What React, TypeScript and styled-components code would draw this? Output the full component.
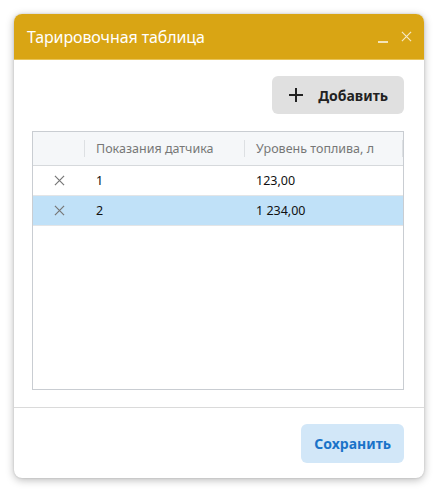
import { createGlobalStyle } from 'styled-components'
import styled from 'styled-components'

const GlobalStyle = createGlobalStyle`
  html, body {
    margin: 0;
    padding: 0;
    background: #ffffff;
    font-family: 'Noto Sans', 'Open Sans', sans-serif;
  }
`

type Row = { id: number; sensor: string; fuel: string }

const rows: Row[] = [
  { id: 1, sensor: '1', fuel: '123,00' },
  { id: 2, sensor: '2', fuel: '1 234,00' },
]

const selectedId = 2

const CloseIcon = ({ size = 12, color = 'currentColor' }: { size?: number; color?: string }) => (
  <svg width={size} height={size} viewBox='0 0 12 12' fill='none'>
    <path d='M1 1L11 11M11 1L1 11' stroke={color} strokeWidth='1.3' />
  </svg>
)

const PlusIcon = () => (
  <svg width='14' height='14' viewBox='0 0 14 14' fill='none'>
    <path d='M7 0V14M0 7H14' stroke='#222' strokeWidth='2' />
  </svg>
)

const App = () => {
  return (
    <>
      <GlobalStyle />
      <Page>
        <Dialog>
          <Header>
            <Title>Тарировочная таблица</Title>
            <HeaderActions>
              <Minimize />
              <CloseIcon size={11} color='rgba(255,255,255,0.75)' />
            </HeaderActions>
          </Header>
          <Body>
            <Toolbar>
              <AddButton>
                <PlusIcon />
                Добавить
              </AddButton>
            </Toolbar>
            <Table>
              <HeadRow>
                <HeadCell />
                <HeadCell $divider>Показания датчика</HeadCell>
                <HeadCell $divider>Уровень топлива, л</HeadCell>
                <HeadEnd />
              </HeadRow>
              {rows.map((row) => (
                <BodyRow key={row.id} $selected={row.id === selectedId}>
                  <IconCell>
                    <CloseIcon size={11} color='#777' />
                  </IconCell>
                  <Cell>{row.sensor}</Cell>
                  <Cell>{row.fuel}</Cell>
                </BodyRow>
              ))}
            </Table>
          </Body>
          <Footer>
            <SaveButton>Сохранить</SaveButton>
          </Footer>
        </Dialog>
      </Page>
    </>
  )
}

const Page = styled.div`
  padding: 14px 14px 15px 14px;
  width: 410px;
`

const Dialog = styled.div`
  width: 410px;
  background: #fff;
  border-radius: 8px;
  overflow: hidden;
  box-shadow: 0 2px 8px rgba(0, 0, 0, 0.28), 0 0 2px rgba(0, 0, 0, 0.15);
  display: flex;
  flex-direction: column;
`

const Header = styled.div`
  height: 46px;
  background: #d9a514;
  border-bottom: 1px solid #e8c45a;
  box-sizing: border-box;
  display: flex;
  align-items: center;
  justify-content: space-between;
  padding: 0 12px 0 13px;
`

const Title = styled.h1`
  margin: 0;
  font-size: 16px;
  font-weight: 400;
  color: #fff;
  letter-spacing: -0.1px;
`

const HeaderActions = styled.div`
  display: flex;
  align-items: center;
  gap: 13px;
`

const Minimize = styled.span`
  display: block;
  width: 10px;
  height: 2px;
  margin-top: 10px;
  background: rgba(255, 255, 255, 0.7);
`

const Body = styled.div`
  padding: 16px 20px 17px 18px;
  border-bottom: 1px solid #dadada;
`

const Toolbar = styled.div`
  display: flex;
  justify-content: flex-end;
  margin-bottom: 17px;
`

const AddButton = styled.button`
  display: flex;
  align-items: center;
  gap: 15px;
  height: 38px;
  padding: 0 16px 0 17px;
  border: none;
  border-radius: 6px;
  background: #e0e0e0;
  font-family: inherit;
  font-size: 14px;
  font-weight: 700;
  color: #222;
`

const Table = styled.div`
  height: 259px;
  border: 1px solid #c9cdd2;
  box-sizing: border-box;
`

const HeadRow = styled.div`
  display: grid;
  grid-template-columns: 51px 160px 1fr 1px;
  height: 33px;
  background: #f5f7f9;
  border-bottom: 1px solid #d6d9dc;
`

const HeadCell = styled.div<{ $divider?: boolean }>`
  display: flex;
  align-items: center;
  padding-left: 12px;
  font-size: 12.5px;
  color: #777;
  position: relative;
  ${(p) =>
    p.$divider &&
    `
    &::before {
      content: '';
      position: absolute;
      left: 0;
      top: 8px;
      bottom: 8px;
      width: 1px;
      background: #dde0e3;
    }
  `}
`

const HeadEnd = styled.div`
  margin: 8px 0;
  background: #dde0e3;
`

const BodyRow = styled.div<{ $selected?: boolean }>`
  display: grid;
  grid-template-columns: 51px 160px 1fr;
  height: 29px;
  border-bottom: 1px solid #e3e5e7;
  background: ${(p) => (p.$selected ? '#c0e1f8' : '#fff')};
`

const Cell = styled.div`
  display: flex;
  align-items: center;
  padding-left: 12px;
  font-size: 12.5px;
  color: #111;
`

const IconCell = styled.div`
  display: flex;
  align-items: center;
  justify-content: center;
  padding-left: 1px;
`

const Footer = styled.div`
  display: flex;
  justify-content: flex-end;
  padding: 16px 20px 15px 0;
`

const SaveButton = styled.button`
  height: 39px;
  padding: 0 13px;
  border: none;
  border-radius: 6px;
  background: #d2e7f8;
  color: #1a73c8;
  font-family: inherit;
  font-size: 14px;
  font-weight: 700;
`

export default App
